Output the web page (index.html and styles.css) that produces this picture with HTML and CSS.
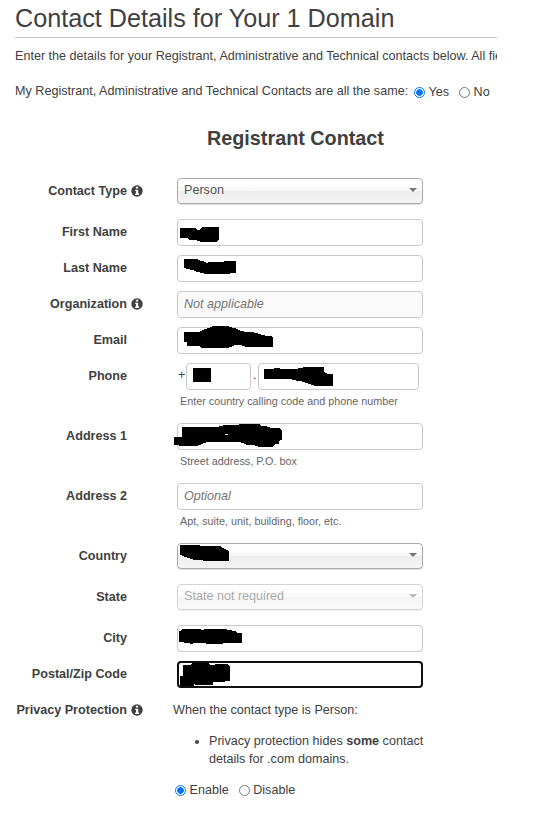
FILE: index.html
```html
<!DOCTYPE html>
<html lang="en">
<head>
<meta charset="utf-8">
<title>Contact Details</title>
<link rel="stylesheet" href="styles.css">
</head>
<body>
<svg class="defs" width="0" height="0">
  <symbol id="info" viewBox="0 0 12 12"><circle cx="6" cy="6" r="5.7" fill="#404040"/><path d="M4.9 1.8h2.3v1.8H4.9zM4.2 4.8h3v3.7h.9v1.4H4.1V8.5H5V6.1h-.8z" fill="#fff"/></symbol>
</svg>
<main class="page">
  <h1 class="title"><span>Contact Details for Your 1 Domain</span></h1>
  <p class="intro">Enter the details for your Registrant, Administrative and Technical contacts below. All fields</p>
  <div class="same"><span class="question">My Registrant, Administrative and Technical Contacts are all the same:</span>
    <label class="choice"><i class="radio on"></i>Yes</label><label class="choice"><i class="radio"></i>No</label></div>
  <h2 class="heading">Registrant Contact</h2>
  <form class="form">
    <div class="row select-row"><div class="label">Contact Type<svg class="info"><use href="#info"/></svg></div><div class="field select">Person<i class="arrow"></i></div></div>
    <div class="row"><div class="label">First Name</div><div class="field"><svg class="ink" viewBox="36 12 450 300"><path d="M45 39H90L97 44H106L112 37 162 36V72L155 80H107L93 75 73 74 66 69H45z"/></svg></div></div>
    <div class="row"><div class="label">Last Name</div><div class="field"><svg class="ink" viewBox="36 120 450 300"><path d="M57 132H96L108 138 120 140 125 144 132 141H172L180 138H213V174H197L195 177H120L108 173 96 171 86 166 74 163 57 159z"/></svg></div></div>
    <div class="row"><div class="label">Organization<svg class="info"><use href="#info"/></svg></div><div class="field muted">Not applicable</div></div>
    <div class="row"><div class="label">Email</div><div class="field"><svg class="ink" viewBox="36 36 450 300"><path d="M57 51H103L113 45 130 39 145 33H187L204 38 216 42 230 49 260 51 280 56 298 61 324 65V96H244L230 91 211 90 192 98H110L105 94 66 92V83L57 80z"/></svg></div></div>
    <div class="row"><div class="label">Phone</div><div class="phone"><span class="plus">+</span><div class="field code"><svg class="ink" viewBox="63 144 450 300"><path d="M86 158H138V201H84V167z"/></svg></div><span class="dot">.</span><div class="field number"><svg class="ink" viewBox="279 144 450 300"><path d="M297 163H326V160H340L375 163 397 161 411 158 425 156H477V170L487 176H504V212H450L435 208 420 203 405 198 381 195V192H297z"/></svg></div></div></div>
    <p class="hint">Enter country calling code and phone number</p>
    <div class="row"><div class="label">Address 1</div><div class="field"><svg class="ink" viewBox="36 24 450 300"><path d="M51 37H155L170 32 190 30 220 30 225 27H282L290 32 306 34 320 40H343L351 46V75L341 78V88H329L323 95H281L270 91 246 90 232 83 213 81H126L112 87 98 92H41V90H27V66H51z"/><path class="gap" d="M180 57h9v3h-9z"/></svg></div></div>
    <p class="hint">Street address, P.O. box</p>
    <div class="row"><div class="label">Address 2</div><div class="field placeholder">Optional</div></div>
    <p class="hint">Apt, suite, unit, building, floor, etc.</p>
    <div class="row select-row"><div class="label">Country</div><div class="field select"><svg class="ink" viewBox="36 84 450 300"><path d="M45 90H104L108 94H166L178 101 192 108V138H114V135H88L66 128 56 124 45 119z"/></svg><i class="arrow"></i></div></div>
    <div class="row select-row"><div class="label">State</div><div class="field select disabled">State not required<i class="arrow"></i></div></div>
    <div class="row"><div class="label">City</div><div class="field"><svg class="ink" viewBox="36 30 450 300"><path d="M42 50 54 42H107L109 45 123 42H178L192 45 212 48 218 53H231V84H173V87H127L122 84H88L82 87 61 83 42 80z"/></svg></div></div>
    <div class="row"><div class="label">Postal/Zip Code</div><div class="field focused"><svg class="ink" viewBox="36 138 450 300"><path d="M54 150H75L82 144H132L136 149H150L156 147H189L195 154V199H181L179 202H144V210H90V207H87V214H45V184L54 182z"/></svg></div></div>
    <div class="row privacy"><div class="label">Privacy Protection<svg class="info"><use href="#info"/></svg></div>
      <div class="details"><p class="when">When the contact type is Person:</p>
        <ul class="notes"><li>Privacy protection hides <b>some</b> contact<br>details for .com domains.</li></ul>
        <div class="options"><label class="choice"><i class="radio on"></i>Enable</label><label class="choice"><i class="radio"></i>Disable</label></div>
      </div></div>
  </form>
</main>
</body>
</html>
```

FILE: styles.css
```css
* { box-sizing: border-box; }
body { margin: 0; background: #fff; color: #404040; font: 12.6px/18px "Liberation Sans", Arial, sans-serif; }
h1, h2, p, ul { margin: 0; padding: 0; }
.defs { display: block; }
.page { width: 539px; height: 825px; overflow: hidden; }
.title { width: 482px; height: 38px; margin-left: 15px; border-bottom: 1px solid #c5c5c5; font-size: 25.2px; font-weight: 400; line-height: 37px; white-space: nowrap; }
.intro { width: 482px; margin: 9px 0 0 15px; overflow: hidden; white-space: nowrap; }
.same { display: flex; margin: 17px 0 0 15px; height: 18px; }
.question { width: 399px; white-space: nowrap; }
.choice { display: flex; align-items: center; height: 20px; margin-right: 10px; }
.radio { flex: none; width: 11px; height: 11px; margin-right: 3.5px; border: 1px solid #767676; border-radius: 50%; }
.radio.on { border-color: #0075ff; background: radial-gradient(circle, #0075ff 0 3px, #fff 3.6px); }
.heading { margin: 26px 0 0 207px; font-size: 19.8px; line-height: 24px; white-space: nowrap; }
.form { margin-top: 28px; }
.row { display: flex; height: 27px; margin-bottom: 9px; }
.select-row { height: 26px; margin-bottom: 15px; }
.label { display: flex; justify-content: flex-end; align-items: center; position: relative; width: 127px; height: 25px; margin-right: 50px; font-weight: 700; white-space: nowrap; }
.info { position: absolute; left: 131px; top: 6.5px; width: 12px; height: 12px; }
.field { position: relative; width: 246px; height: 27px; padding-left: 6px; border: 1px solid #c8c8c8; border-radius: 4px; background: #fff; line-height: 24px; }
.muted, .placeholder { color: #757575; font-style: italic; }
.muted { background: #fafafa; }
.select { height: 26px; border-color: #aaa; color: #555; line-height: 22px; background: linear-gradient(#fff 20%, #f6f6f6 50%, #eee 52%, #f4f4f4); box-shadow: 0 1px 1px #ddd; }
.disabled { opacity: .5; }
.arrow { position: absolute; right: 5px; top: 9px; border: 4px solid transparent; border-top: 4px solid #777; border-bottom: 0; }
.focused { border: 2px solid #101010; }
.ink { position: absolute; left: -1px; top: -1px; width: 150px; height: 100px; overflow: visible; fill: #000; z-index: 1; shape-rendering: crispEdges; pointer-events: none; }
.focused .ink { left: -2px; top: -2px; }
.ink .gap { fill: #fff; }
.phone { display: flex; }
.plus { width: 9px; padding-left: 1px; line-height: 24px; }
.dot { width: 7px; padding-left: 2px; line-height: 24px; }
.code { width: 65px; }
.number { width: 161px; }
.hint { height: 15px; margin: -6px 0 15px 180px; color: #666; font-size: 10.8px; line-height: 17px; white-space: nowrap; }
.privacy { height: 110px; }
.details { margin-left: -4px; padding-top: 4px; }
.notes { margin: 13px 0 0 36px; list-style: disc; white-space: nowrap; }
.options { display: flex; margin: 12px 0 0 2px; }
```
